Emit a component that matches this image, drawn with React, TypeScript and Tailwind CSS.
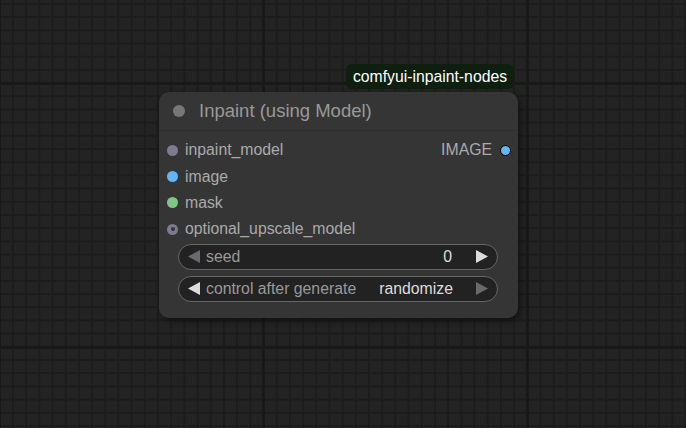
import React from "react";

interface Slot {
  name: string;
  dot: string;
  optional?: boolean;
}

const inputs: Slot[] = [
  { name: "inpaint_model", dot: "bg-[#7c7c8e]" },
  { name: "image", dot: "bg-[#64b5f6]" },
  { name: "mask", dot: "bg-[#81c784]" },
  { name: "optional_upscale_model", dot: "bg-[#7c7c8e]", optional: true },
];

function Arrow({ dir, on }: { dir: "left" | "right"; on: boolean }) {
  return (
    <svg width="14" height="13" viewBox="0 0 14 13" className="shrink-0">
      <polygon
        points={dir === "left" ? "13,0 13,13 1,6.5" : "1,0 1,13 13,6.5"}
        fill={on ? "#dddddd" : "#6a6a6a"}
      />
    </svg>
  );
}

function Widget({
  label,
  value,
  leftOn,
  rightOn,
  center,
}: {
  label: string;
  value: string;
  leftOn: boolean;
  rightOn: boolean;
  center?: boolean;
}) {
  return (
    <div className="flex items-center h-[26px] ml-[19px] mr-[20px] rounded-full border border-[#666] bg-[#222] pl-[8px] pr-[8px]">
      <Arrow dir="left" on={leftOn} />
      <span className="ml-[5px] text-[#999] text-[15.8px]">{label}</span>
      <span
        className={`text-[#ddd] text-[15.8px] ${center ? "ml-[23px] flex-1" : "ml-auto mr-[23px]"}`}
      >
        {value}
      </span>
      <Arrow dir="right" on={rightOn} />
    </div>
  );
}

export default function App() {
  return (
    <div
      className="relative w-[686px] h-[428px] overflow-hidden bg-[#232323] font-['Liberation_Sans',Arial,sans-serif]
        bg-[linear-gradient(90deg,#181818_3px,transparent_3px),linear-gradient(180deg,#181818_3px,transparent_3px),linear-gradient(90deg,#1c1c1c_2px,transparent_2px),linear-gradient(180deg,#1c1c1c_2px,transparent_2px)]
        bg-[length:264px_264px,264px_264px,13.2px_13.2px,13.2px_13.2px]
        bg-[position:262px_0,0_82px,12px_0,0_3px]"
    >
      {/* source badge */}
      <div className="absolute left-[346px] top-[64px] h-[25px] w-[168px] rounded-[6px] bg-[#0f1f0f] flex items-center justify-center text-white text-[15.75px] leading-none">
        comfyui-inpaint-nodes
      </div>

      {/* node */}
      <div className="absolute left-[159px] top-[92px] w-[359px] h-[226px] rounded-[10px] bg-[#353535] shadow-[3px_3px_6px_rgba(0,0,0,0.45)] flex flex-col">
        <div className="h-[39px] flex items-center border-b border-[#2e2e2e] shrink-0">
          <div className="ml-[14px] w-[12px] h-[12px] rounded-full bg-[#777]" />
          <span className="ml-[14px] text-[#999] text-[18.5px] leading-none">Inpaint (using Model)</span>
        </div>

        <div className="pt-[6px] flex flex-col">
          {inputs.map((s, i) => (
            <div key={s.name} className="h-[26.4px] flex items-center">
              <div className={`ml-[8px] w-[11px] h-[11px] rounded-full ${s.dot} flex items-center justify-center`}>
                {s.optional && <div className="w-[4px] h-[4px] rounded-full bg-[#353535]" />}
              </div>
              <span className="ml-[7px] text-[#aaa] text-[15.8px] leading-none">{s.name}</span>
              {i === 0 && (
                <>
                  <span className="ml-auto text-[#aaa] text-[15.8px] leading-none">IMAGE</span>
                  <div className="ml-[8px] mr-[7px] w-[11px] h-[11px] rounded-full bg-[#64b5f6] border border-black" />
                </>
              )}
            </div>
          ))}
        </div>

        <div className="mt-[1px] flex flex-col gap-[6px]">
          <Widget label="seed" value="0" leftOn={false} rightOn={true} />
          <Widget label="control after generate" value="randomize" leftOn={true} rightOn={false} center />
        </div>
      </div>
    </div>
  );
}
